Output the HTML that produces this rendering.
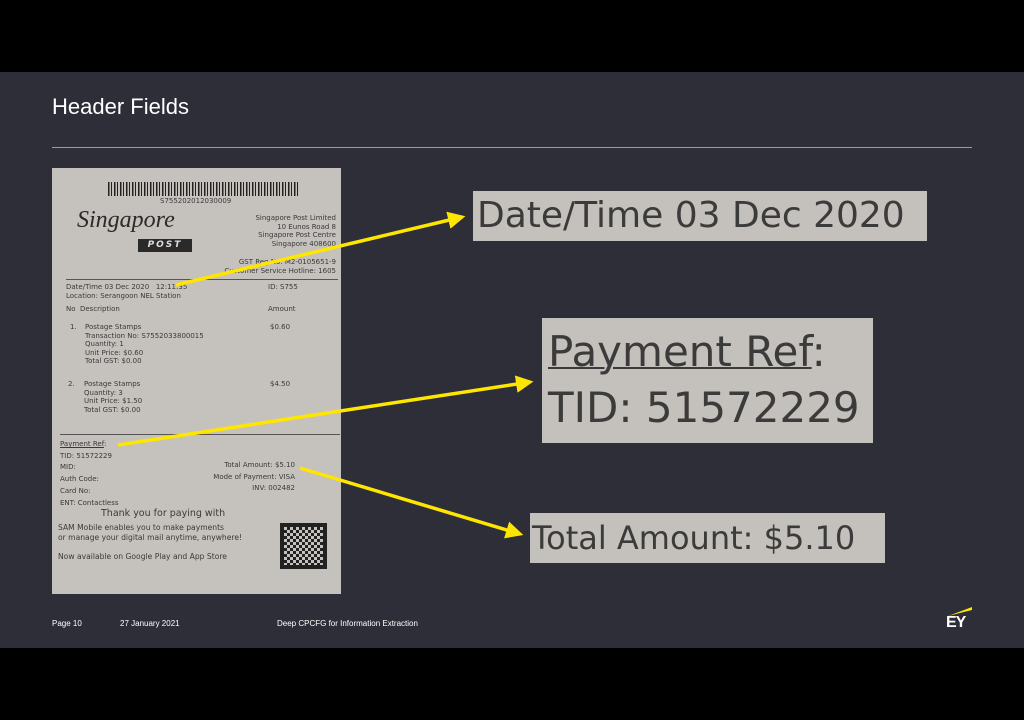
<!DOCTYPE html>
<html><head><meta charset="utf-8"><style>
*{margin:0;padding:0;box-sizing:border-box}
body{width:1024px;height:720px;background:#000;position:relative;overflow:hidden;font-family:"Liberation Sans",sans-serif}
.slide{position:absolute;left:0;top:72px;width:1024px;height:576px;background:#2e2e38}
.a{position:absolute;white-space:nowrap}
.rc{position:absolute;left:52px;top:168px;width:289px;height:426px;background:#c5c1bc;color:#3a3a3a;font-family:"DejaVu Sans",sans-serif;font-size:7px;line-height:8.5px}
.box{position:absolute;background:#c4c0bb;color:#3b3b3b;white-space:nowrap;font-family:"DejaVu Sans",sans-serif}
</style></head><body>
<div class="slide"></div>
<div class="a" style="left:52px;top:94px;color:#fff;font-size:22px">Header Fields</div>
<div class="a" style="left:52px;top:147px;width:920px;height:1px;background:#bfa900"></div>

<div class="rc">
 <div class="a" style="left:56px;top:14px;width:190px;height:14px;background:repeating-linear-gradient(90deg,#222 0 1.5px,transparent 1.5px 3px,#222 3px 4px,transparent 4px 6px)"></div>
 <div class="a" style="left:108px;top:29px;font-size:7px">S755202012030009</div>
 <div class="a" style="left:25px;top:48px;font-size:24px;font-style:italic;font-family:'Liberation Serif',serif;color:#2a2a2a">Singapore</div>
 <div class="a" style="left:86px;top:71px;width:54px;height:13px;background:#2a2a2a;color:#ddd;font-size:9px;font-weight:bold;font-style:italic;text-align:center;letter-spacing:2px;line-height:13px">POST</div>
 <div class="a" style="right:5px;top:46px;text-align:right">Singapore Post Limited<br>10 Eunos Road 8<br>Singapore Post Centre<br>Singapore 408600</div>
 <div class="a" style="right:5px;top:90px;text-align:right">GST Reg No: M2-0105651-9<br>Customer Service Hotline: 1605</div>
 <div class="a" style="left:14px;top:111px;width:272px;height:1px;background:#555"></div>
 <div class="a" style="left:14px;top:115px">Date/Time 03 Dec 2020 &nbsp; 12:11:35<br>Location: Serangoon NEL Station</div>
 <div class="a" style="left:216px;top:115px">ID: S755</div>
 <div class="a" style="left:14px;top:137px">No &nbsp;Description</div>
 <div class="a" style="left:216px;top:137px">Amount</div>
 <div class="a" style="left:18px;top:155px">1.</div>
 <div class="a" style="left:33px;top:155px">Postage Stamps<br>Transaction No: S7552033800015<br>Quantity: 1<br>Unit Price: $0.60<br>Total GST: $0.00</div>
 <div class="a" style="left:218px;top:155px">$0.60</div>
 <div class="a" style="left:16px;top:212px">2.</div>
 <div class="a" style="left:32px;top:212px">Postage Stamps<br>Quantity: 3<br>Unit Price: $1.50<br>Total GST: $0.00</div>
 <div class="a" style="left:218px;top:212px">$4.50</div>
 <div class="a" style="left:8px;top:266px;width:280px;height:1px;background:#555"></div>
 <div class="a" style="left:8px;top:271px;line-height:11.7px"><u>Payment Ref</u>:<br>TID: 51572229<br>MID:<br>Auth Code:<br>Card No:<br>ENT: Contactless</div>
 <div class="a" style="right:46px;top:292px;text-align:right;line-height:11.7px">Total Amount: $5.10<br>Mode of Payment: VISA<br>INV: 002482</div>
 <div class="a" style="left:49px;top:342px;font-size:9.5px">Thank you for paying with</div>
 <div class="a" style="left:6px;top:355px;font-size:7.6px;line-height:9.5px">SAM Mobile enables you to make payments<br>or manage your digital mail anytime, anywhere!<br><br>Now available on Google Play and App Store</div>
 <div class="a" style="left:228px;top:355px;width:47px;height:46px;background:repeating-conic-gradient(#222 0 25%,#c5c1bc 0 50%) 0 0/6px 6px;border:4px solid #222"></div>
</div>

<div class="box" style="left:473px;top:191px;width:454px;height:50px;font-size:36px;line-height:50px;padding-left:4px">Date/Time 03 Dec 2020</div>
<div class="box" style="left:542px;top:318px;width:331px;height:125px;font-size:42px;line-height:56px;padding:6px 0 0 6px"><span style="text-decoration:underline;text-decoration-thickness:2px">Payment Ref</span>:<br>TID: 51572229</div>
<div class="box" style="left:530px;top:513px;width:355px;height:50px;font-size:32px;line-height:50px;padding-left:2px">Total Amount: $5.10</div>

<svg class="a" style="left:0;top:0" width="1024" height="720">
<defs><marker id="m" markerWidth="5" markerHeight="5" refX="4" refY="2.5" orient="auto"><path d="M0,0L5,2.5L0,5z" fill="#ffe600"/></marker></defs>
<g stroke="#ffe600" stroke-width="3.5" marker-end="url(#m)">
<line x1="176" y1="285" x2="462" y2="217"/>
<line x1="118" y1="445" x2="530" y2="382"/>
<line x1="300" y1="468" x2="520" y2="534"/>
</g></svg>

<div class="a" style="left:52px;top:619px;color:#fff;font-size:8px">Page 10</div>
<div class="a" style="left:120px;top:619px;color:#fff;font-size:8px">27 January 2021</div>
<div class="a" style="left:277px;top:619px;color:#fff;font-size:8px">Deep CPCFG for Information Extraction</div>
<svg class="a" style="left:946px;top:604px" width="28" height="30"><path d="M2 12L26 3L26 6Z" fill="#ffe600"/></svg>
<div class="a" style="left:946px;top:614px;color:#fff;font-size:16px;font-weight:bold;letter-spacing:-1px">EY</div>
</body></html>
